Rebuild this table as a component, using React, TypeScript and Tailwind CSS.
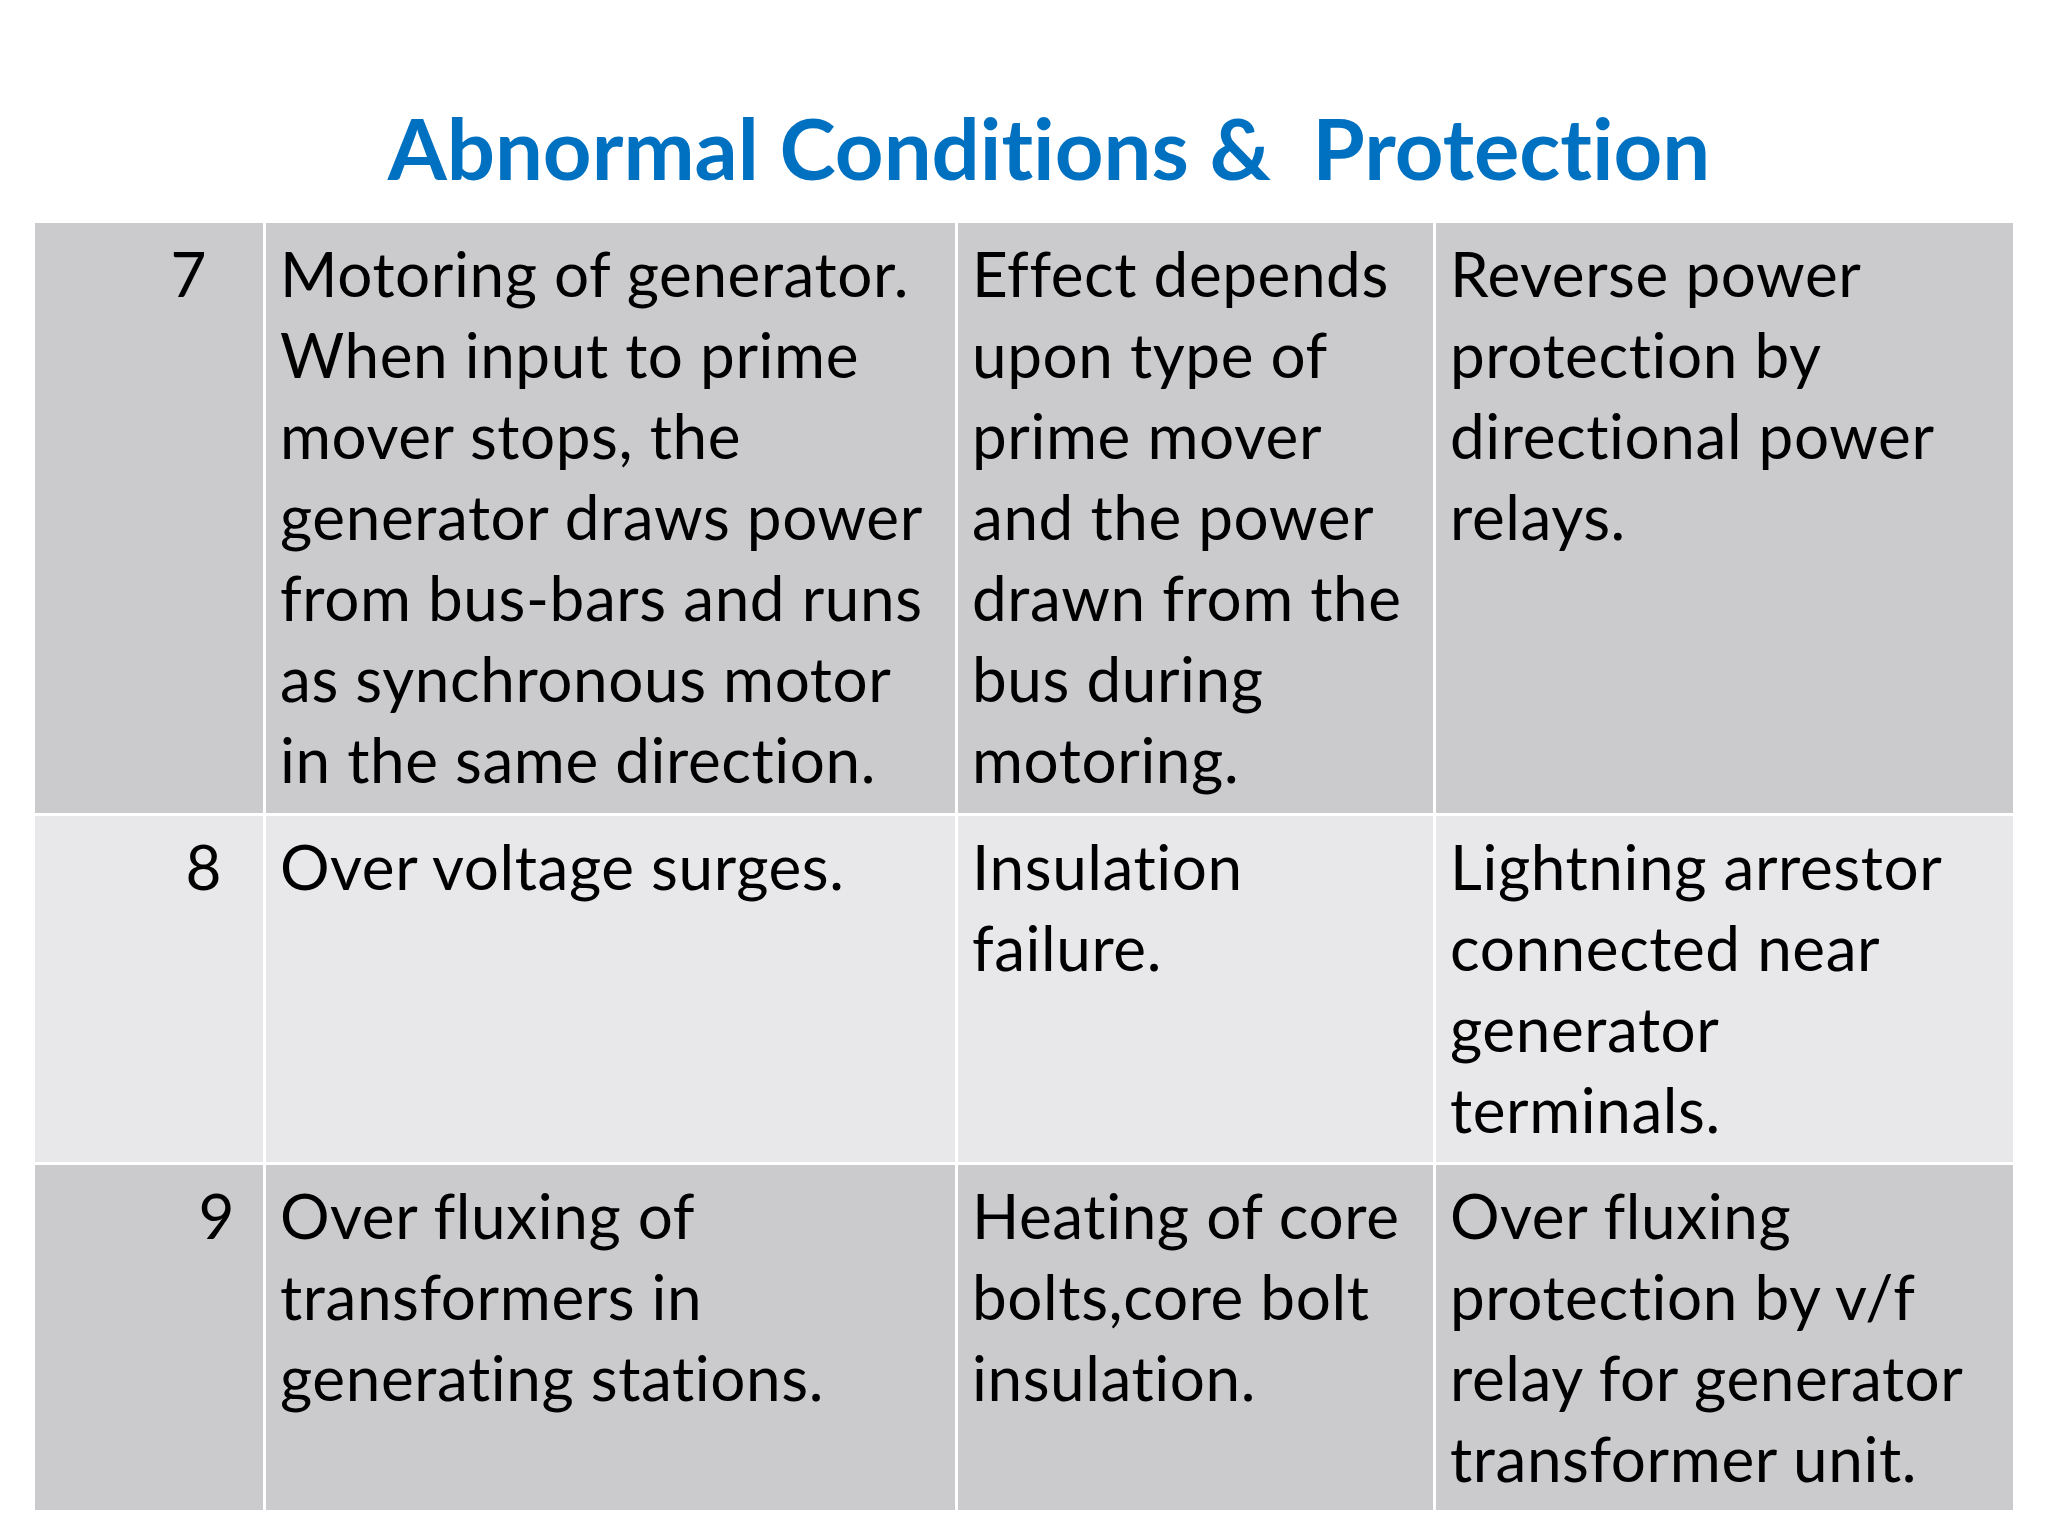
const rows = [
  {
    no: "7",
    shade: "bg-[#cbcacd]",
    numPad: "pr-[56px]",
    cause: [
      "Motoring of generator.",
      "When input to prime",
      "mover stops, the",
      "generator draws power",
      "from bus-bars and runs",
      "as synchronous motor",
      "in the same direction.",
    ],
    effect: [
      "Effect depends",
      "upon type of",
      "prime mover",
      "and the power",
      "drawn from the",
      "bus during",
      "motoring.",
    ],
    protection: [
      "Reverse power",
      "protection by",
      "directional power",
      "relays.",
    ],
  },
  {
    no: "8",
    shade: "bg-[#e8e7ea]",
    numPad: "pr-[41px]",
    cause: ["Over voltage surges."],
    effect: ["Insulation", "failure."],
    protection: [
      "Lightning arrestor",
      "connected near",
      "generator",
      "terminals.",
    ],
  },
  {
    no: "9",
    shade: "bg-[#cbcacd]",
    numPad: "pr-[28px]",
    cause: [
      "Over fluxing of",
      "transformers in",
      "generating stations.",
    ],
    effect: ["Heating of core", "bolts,core bolt", "insulation."],
    protection: [
      "Over fluxing",
      "protection by v/f",
      "relay for generator",
      "transformer unit.",
    ],
  },
];

function Lines({ lines }: { lines: string[] }) {
  return (
    <>
      {lines.map((line, i) => (
        <div key={i} className="whitespace-nowrap">
          {line}
        </div>
      ))}
    </>
  );
}

function App() {
  return (
    <div
      className="w-[2048px] h-[1536px] bg-white flex flex-col [font-variant-ligatures:none]"
      style={{ fontFamily: "Lato, 'Open Sans', sans-serif" }}
    >
      {/* Title */}
      <div className="h-[223px] flex items-start justify-center pt-[97px] pl-[50px]">
        <h1 className="text-[85px] leading-[100px] font-bold text-[#0070c0] whitespace-pre">
          Abnormal Conditions &amp;  Protection
        </h1>
      </div>

      {/* Table */}
      <div className="ml-[35px] w-[1978px] grid grid-cols-[228px_689px_475px_577px] grid-rows-[590px_346px_345px] gap-[3px] bg-white text-black text-[62px] leading-[81px] tracking-[0.6px]">
        {rows.map((row) => (
          <div key={row.no} className="contents">
            <div className={`${row.shade} ${row.numPad} pt-[10px] text-right`}>
              {row.no}
            </div>
            <div className={`${row.shade} pt-[10px] pl-[14px]`}>
              <Lines lines={row.cause} />
            </div>
            <div className={`${row.shade} pt-[10px] pl-[14px]`}>
              <Lines lines={row.effect} />
            </div>
            <div className={`${row.shade} pt-[10px] pl-[14px]`}>
              <Lines lines={row.protection} />
            </div>
          </div>
        ))}
      </div>
    </div>
  );
}

export default App;
